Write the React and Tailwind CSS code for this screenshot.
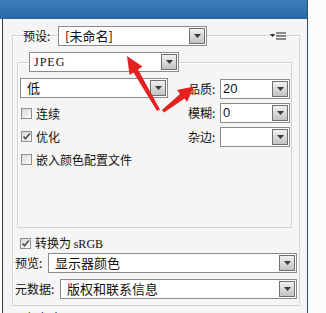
import React from 'react';

const DropBtn = () => (
  <span className="flex h-[16px] w-[16px] shrink-0 items-center justify-center border border-[#6f6f6f] bg-gradient-to-b from-[#f0f0f0] to-[#c2c2c2]">
    <svg width="7" height="4" viewBox="0 0 7 4">
      <path d="M0 0h7L3.5 4z" fill="#3a3a3a" />
    </svg>
  </span>
);

const Select = ({ className, textClass, children }) => (
  <div className={`flex h-[20px] items-center border border-[#8b8b8b] bg-white pr-px ${className}`}>
    <span className={`flex-1 whitespace-nowrap leading-[16px] ${textClass}`}>{children}</span>
    <DropBtn />
  </div>
);

const Check = ({ checked, children, className }) => (
  <div className={`flex items-center ${className}`}>
    <span className="flex h-[11px] w-[11px] items-center justify-center border border-[#8e8e8e] bg-gradient-to-br from-[#d9d9d9] to-[#fbfbfb]">
      {checked && (
        <svg width="9" height="9" viewBox="0 0 9 9">
          <path d="M1.5 4.5l2 2.2L7.8 1.6" stroke="#4d4d4d" strokeWidth="1.6" fill="none" />
        </svg>
      )}
    </span>
    <span className="ml-[4px] leading-[16px]">{children}</span>
  </div>
);

const Field = ({ label, value }) => (
  <div className="flex h-[20px] items-center">
    <span className="w-[32px] leading-[16px]">{label}</span>
    <Select className="w-[70px]" textClass="pl-[2px] font-['Liberation_Sans'] text-[13px]">
      {value}
    </Select>
  </div>
);

export default function App() {
  return (
    <div className="relative h-[313px] w-[326px] overflow-hidden bg-[#fbfcfd] font-['Noto_Sans_CJK_SC',sans-serif] text-[12px] text-[#111]">
      <div className="flex h-full w-[308px] flex-col border-r border-[#2b4d56]">
        <div className="h-[19px] shrink-0 bg-gradient-to-b from-[#3d7dbd] to-[#2b67a5]" />
        <div className="ml-[2px] flex-1 border-l border-[#3a3a3a] bg-[#f5f5f5] pl-[9px] pt-[16px]">
          <div className="h-[271px] w-[288px] border border-[#d4d4d4] shadow-[inset_1px_1px_0_#ffffff]">
            {/* preset row */}
            <div className="-mt-[10px] flex h-[20px] items-center pl-[10px]">
              <span className="w-[35px] leading-[16px]">预设:</span>
              <Select className="w-[149px]" textClass="pl-[6px] text-[13px]">
                [未命名]
              </Select>
              <svg className="ml-auto mr-[13px]" width="16" height="8" viewBox="0 0 16 8">
                <path d="M0 2h5L2.5 5z" fill="#222" />
                <path d="M6 1h10M6 4h10M6 7h10" stroke="#222" strokeWidth="1.2" />
              </svg>
            </div>

            {/* format group */}
            <div className="ml-[4px] mt-[16px] h-[166px] w-[275px] border border-[#d4d4d4] shadow-[inset_1px_1px_0_#ffffff]">
              <Select className="-mt-[11px] ml-[11px] w-[150px]" textClass="pl-[4px] font-['Liberation_Serif'] text-[12px] tracking-[1px]">
                JPEG
              </Select>
              <div className="mt-[6px] flex">
                <div className="ml-[2px] w-[148px]">
                  <Select className="w-[148px]" textClass="pl-[6px] text-[13px]">
                    低
                  </Select>
                  <div className="mt-[4px] flex flex-col pl-px">
                    <Check className="h-[23px]">连续</Check>
                    <Check className="h-[23px]" checked>
                      优化
                    </Check>
                    <Check className="h-[23px]">嵌入颜色配置文件</Check>
                  </div>
                </div>
                <div className="ml-[20px] flex flex-col gap-[4px] pt-px">
                  <Field label="品质:" value="20" />
                  <Field label="模糊:" value="0" />
                  <Field label="杂边:" value="" />
                </div>
              </div>
            </div>

            <Check className="ml-[7px] mt-[8px] h-[14px]" checked>
              转换为 <span className="font-['Liberation_Serif'] text-[12px]">sRGB</span>
            </Check>
            <div className="mt-[3px] flex h-[20px] items-center pl-[2px]">
              <span className="w-[33px] leading-[16px]">预览:</span>
              <Select className="w-[249px]" textClass="pl-[6px] text-[13px]">
                显示器颜色
              </Select>
            </div>
            <div className="mt-[6px] flex h-[20px] items-center pl-[2px]">
              <span className="w-[45px] leading-[16px]">元数据:</span>
              <Select className="w-[237px]" textClass="pl-[6px] text-[13px]">
                版权和联系信息
              </Select>
            </div>
          </div>
          <div className="ml-[14px] mt-[4px] leading-[16px]">颜色表</div>
        </div>
      </div>

      <svg className="pointer-events-none absolute left-0 top-0" width="326" height="313">
        <polygon points="142.5,66.5 127,56 129.5,75 133.5,72.5 157,111 160,109.5 138,69.5" fill="#e3211f" />
        <polygon points="177,90 194,86.5 187,102 184.5,98.5 164,112.5 162,110 180,94" fill="#e3211f" />
      </svg>
    </div>
  );
}
